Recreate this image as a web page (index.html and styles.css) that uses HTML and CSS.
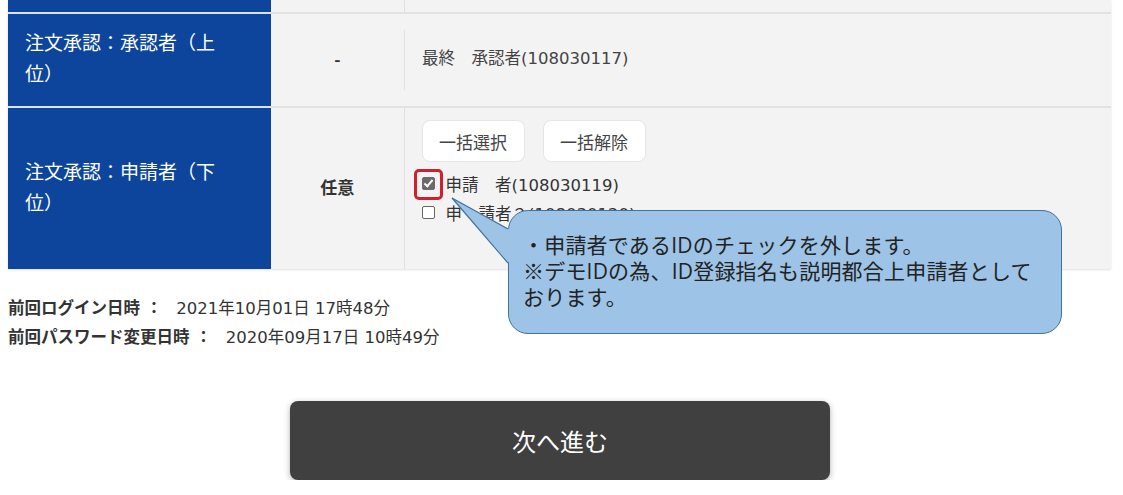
FILE: index.html
```html
<!DOCTYPE html>
<html lang="ja">
<head>
    <meta charset="UTF-8">
    <title>承認者設定</title>
    <link rel="stylesheet" href="styles.css">
</head>
<body>
    <div class="page">
        <table class="approval-table">
            <colgroup>
                <col class="col-head">
                <col class="col-req">
                <col>
            </colgroup>
            <tr class="row-cut">
                <th></th>
                <td class="req"></td>
                <td class="val"></td>
            </tr>
            <tr class="row-upper">
                <th>注文承認：承認者（上位）</th>
                <td class="req">-</td>
                <td class="val val-plain"><div class="val-inner">最終　承認者(108030117)</div></td>
            </tr>
            <tr class="row-lower">
                <th>注文承認：申請者（下位）</th>
                <td class="req">任意</td>
                <td class="val">
                    <div class="bulk-buttons">
                        <button class="bulk-btn">一括選択</button>
                        <button class="bulk-btn">一括解除</button>
                    </div>
                    <label class="check-row">
                        <span class="checkbox checked">
                            <span class="highlight"></span>
                        </span>
                        申請　者(108030119)
                    </label>
                    <label class="check-row">
                        <span class="checkbox"></span>
                        申　請者２(108030120)
                    </label>
                </td>
            </tr>
        </table>

        <!-- 吹き出し -->
        <div class="callout">
            <div class="callout-box">
                ・申請者であるIDのチェックを外します。<br>
                ※デモIDの為、ID登録指名も説明都合上申請者として<br>
                おります。
            </div>
            <svg class="callout-tail" width="80" height="80" viewBox="0 0 80 80">
                <polygon points="11,6 68,37 68,71" fill="#9dc3e6"/>
                <polyline points="67,37 11,6 67,71" fill="none" stroke="#41719c" stroke-width="1.2"/>
            </svg>
        </div>

        <div class="history">
            <div><span class="history-label">前回ログイン日時 ：</span>2021年10月01日 17時48分</div>
            <div><span class="history-label">前回パスワード変更日時 ：</span>2020年09月17日 10時49分</div>
        </div>

        <div class="next-wrap">
            <button class="next-button">次へ進む</button>
        </div>
    </div>
</body>
</html>
```

FILE: styles.css
```css
body {
    margin: 0;
    background: #ffffff;
    font-family: "DejaVu Sans", "Noto Sans CJK JP", sans-serif;
    color: #333333;
}

.page {
    position: relative;
    padding: 0 12px 0 8px;
}

.approval-table {
    width: 1103px;
    border-collapse: collapse;
    box-shadow: 0 1px 2px rgba(0, 0, 0, 0.12);
}

.col-head {
    width: 263px;
}

.col-req {
    width: 133px;
}

.approval-table th {
    background: #0d459c;
    color: #ffffff;
    font-family: "Noto Sans CJK JP", sans-serif;
    font-weight: normal;
    font-size: 19px;
    line-height: 31px;
    text-align: left;
    padding: 0 40px 6px 17px;
    border-bottom: 2px solid #d9e3f0;
}

.approval-table .row-cut th {
    padding: 0;
}

.approval-table td {
    background: #f3f3f3;
    border-bottom: 2px solid #e2e2e2;
    font-size: 16.5px;
    padding: 0;
}

.req {
    text-align: center;
    font-weight: bold;
    color: #333333;
}

.approval-table .req {
    font-family: "Noto Sans CJK JP", sans-serif;
    font-size: 17px;
    padding-bottom: 4px;
}

.approval-table .row-cut .req {
    padding: 0;
}

.val {
    border-left: 1px solid #e0e0e0;
}

.row-cut {
    height: 13px;
}

.row-upper {
    height: 94px;
}

.approval-table .val-plain {
    border-left: none;
}

.val-inner {
    border-left: 1px solid #e0e0e0;
    padding: 14px 17px 16px;
    line-height: 30px;
    color: #444444;
}

.row-lower {
    height: 162px;
}

.approval-table .row-lower th,
.approval-table .row-lower td {
    border-bottom: none;
}

.approval-table .row-lower .val {
    vertical-align: top;
    padding: 12px 17px 0;
}

.bulk-buttons {
    display: flex;
    gap: 18px;
    margin-bottom: 7px;
}

.bulk-btn {
    width: 103px;
    height: 42px;
    background: #ffffff;
    border: 1px solid #e6e6e6;
    border-radius: 8px;
    font-family: "Noto Sans CJK JP", sans-serif;
    font-size: 17px;
    color: #444444;
}

.check-row {
    display: flex;
    align-items: center;
    gap: 11px;
    height: 29px;
    color: #333333;
}

.checkbox {
    position: relative;
    width: 11px;
    height: 11px;
    border: 1px solid #666666;
    border-radius: 2px;
    background: #ffffff;
    flex-shrink: 0;
}

.checkbox.checked {
    background: #6b6b6b;
    border-color: #6b6b6b;
}

.checkbox.checked::after {
    content: '';
    position: absolute;
    left: 3px;
    top: 0px;
    width: 3px;
    height: 7px;
    border: solid #ffffff;
    border-width: 0 2px 2px 0;
    transform: rotate(40deg);
}

.highlight {
    position: absolute;
    left: -9px;
    top: -9px;
    width: 23px;
    height: 25px;
    border: 3px solid #d0202e;
    border-radius: 5px;
}

.callout {
    position: absolute;
    left: 441px;
    top: 192px;
}

.callout-tail {
    position: absolute;
    left: 0;
    top: 0;
}

.callout-box {
    position: absolute;
    left: 67px;
    top: 18px;
    box-sizing: border-box;
    width: 554px;
    height: 124px;
    padding: 21px 0 0 14px;
    background: #9dc3e6;
    border: 1.2px solid #41719c;
    border-radius: 20px;
    font-family: "Open Sans", "Noto Sans CJK JP", sans-serif;
    font-size: 21px;
    line-height: 26px;
    letter-spacing: 0.2px;
    color: #222222;
    white-space: nowrap;
}

.history {
    padding-top: 25px;
    font-size: 16.5px;
    line-height: 29px;
    color: #333333;
}

.history-label {
    font-weight: bold;
    margin-right: 14px;
}

.next-wrap {
    padding-top: 49px;
    padding-left: 282px;
}

.next-button {
    width: 540px;
    height: 79px;
    background: #404040;
    color: #ffffff;
    border: none;
    border-radius: 8px;
    font-family: "Noto Sans CJK JP", sans-serif;
    font-size: 24px;
    box-shadow: 0 2px 6px rgba(0, 0, 0, 0.3);
}
```
